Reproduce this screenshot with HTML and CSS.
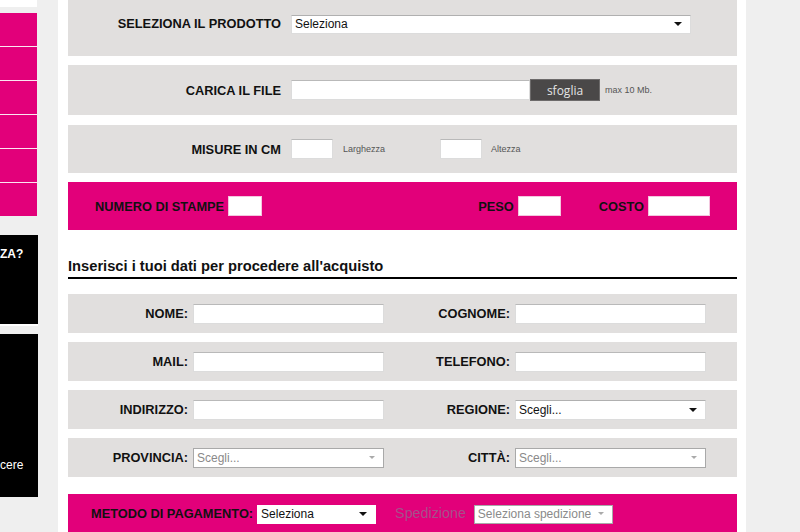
FILE: index.html
```html
<!DOCTYPE html>
<html lang="it">
<head>
    <meta charset="UTF-8">
    <meta name="viewport" content="width=device-width, initial-scale=1.0">
    <title>Ordina la tua stampa</title>
    <link rel="stylesheet" href="styles.css">
</head>
<body>
    <div class="page">

        <!-- colonna laterale (tagliata a sinistra) -->
        <aside class="sidebar">
            <div class="side-top"></div>
            <ul class="side-menu">
                <li></li>
                <li></li>
                <li></li>
                <li></li>
                <li></li>
                <li></li>
            </ul>
            <div class="side-box side-box-small">
                <p class="side-title">ZA?</p>
            </div>
            <div class="side-box side-box-big">
                <p class="side-text">cere</p>
            </div>
        </aside>

        <div class="gutter"></div>

        <main class="content">
            <form action="">

                <div class="panel panel-first">
                    <label class="panel-label" for="prodotto">SELEZIONA IL PRODOTTO</label>
                    <span class="select-wrap select-product">
                        <select id="prodotto">
                            <option value="">Seleziona</option>
                        </select>
                    </span>
                </div>

                <div class="panel panel-file">
                    <label class="panel-label" for="file">CARICA IL FILE</label>
                    <input class="field field-file" id="file" type="text">
                    <button class="btn-browse" type="button">sfoglia</button>
                    <span class="hint">max 10 Mb.</span>
                </div>

                <div class="panel panel-size">
                    <label class="panel-label" for="larghezza">MISURE IN CM</label>
                    <input class="field field-size" id="larghezza" type="text">
                    <span class="hint hint-size">Larghezza</span>
                    <input class="field field-size" id="altezza" type="text">
                    <span class="hint">Altezza</span>
                </div>

                <div class="pink-bar">
                    <label class="pink-label" for="stampe">NUMERO DI STAMPE</label>
                    <input class="field-pink stampe" id="stampe" type="text">
                    <label class="pink-label peso" for="peso">PESO</label>
                    <input class="field-pink peso-input" id="peso" type="text">
                    <label class="pink-label" for="costo">COSTO</label>
                    <input class="field-pink costo-input" id="costo" type="text">
                </div>

                <h2 class="section-title">Inserisci i tuoi dati per procedere all'acquisto</h2>

                <div class="row">
                    <label for="nome">NOME:</label>
                    <input class="field" id="nome" type="text">
                    <label for="cognome">COGNOME:</label>
                    <input class="field" id="cognome" type="text">
                </div>

                <div class="row">
                    <label for="mail">MAIL:</label>
                    <input class="field" id="mail" type="text">
                    <label for="telefono">TELEFONO:</label>
                    <input class="field" id="telefono" type="text">
                </div>

                <div class="row">
                    <label for="indirizzo">INDIRIZZO:</label>
                    <input class="field" id="indirizzo" type="text">
                    <label for="regione">REGIONE:</label>
                    <span class="select-wrap">
                        <select id="regione">
                            <option value="">Scegli...</option>
                        </select>
                    </span>
                </div>

                <div class="row">
                    <label for="provincia">PROVINCIA:</label>
                    <span class="select-wrap is-disabled">
                        <select id="provincia" disabled>
                            <option value="">Scegli...</option>
                        </select>
                    </span>
                    <label for="citta">CITTÀ:</label>
                    <span class="select-wrap is-disabled">
                        <select id="citta" disabled>
                            <option value="">Scegli...</option>
                        </select>
                    </span>
                </div>

                <div class="pay-bar">
                    <label class="pink-label" for="pagamento">METODO DI PAGAMENTO:</label>
                    <span class="select-wrap select-pay">
                        <select id="pagamento">
                            <option value="">Seleziona</option>
                        </select>
                    </span>
                    <label class="ship-label" for="spedizione">Spedizione</label>
                    <span class="select-wrap is-disabled select-ship">
                        <select id="spedizione" disabled>
                            <option value="">Seleziona spedizione</option>
                        </select>
                    </span>
                </div>

            </form>
        </main>

        <div class="right-side"></div>
    </div>
</body>
</html>
```

FILE: styles.css
```css
* {
    box-sizing: border-box;
    font-family: Arial, "Liberation Sans", Helvetica, sans-serif;
}

body {
    margin: 0;
    background-color: #efefef;
    overflow: hidden;
}

.page {
    display: flex;
    height: 532px;
    overflow: hidden;
}

/* ---- colonna laterale ---- */

.sidebar {
    width: 38px;
    flex-shrink: 0;
    display: flex;
    flex-direction: column;
}

.side-top {
    height: 7px;
    width: 37px;
    background-color: #fff;
    margin-bottom: 6px;
}

.side-menu {
    list-style: none;
    margin: 0;
    padding: 0;
    width: 37px;
    display: flex;
    flex-direction: column;
    gap: 1px;
    background-color: #fbe6f1;
}

.side-menu li {
    height: 33px;
    background-color: #e2007a;
}

.side-box {
    background-color: #000;
    color: #fff;
    display: flex;
    white-space: nowrap;
}

.side-box-small {
    margin-top: 19px;
    height: 91px;
    border-bottom: 2px solid #fff;
}

.side-box-big {
    margin-top: 8px;
    height: 163px;
    align-items: flex-end;
    padding-bottom: 25px;
}

.side-title {
    margin: 12px 0 0;
    font-size: 12px;
    font-weight: bold;
}

.side-text {
    margin: 0;
    font-size: 12px;
}

.gutter {
    width: 20px;
    flex-shrink: 0;
}

.right-side {
    flex: 1;
}

/* ---- contenuto ---- */

.content {
    width: 688px;
    flex-shrink: 0;
    background-color: #fff;
    padding: 0 9px 0 10px;
}

.panel {
    background-color: #e1dfde;
    display: flex;
    align-items: center;
    margin-bottom: 9px;
}

.panel-first {
    height: 56px;
    align-items: flex-start;
    padding-top: 14px;
    margin-bottom: 9px;
}

.panel-file {
    height: 50px;
    margin-bottom: 10px;
}

.panel-size {
    height: 48px;
}

.panel-label {
    width: 213px;
    margin-right: 10px;
    text-align: right;
    font-size: 12.8px;
    font-weight: bold;
    color: #111;
    line-height: 19px;
}

.field {
    height: 20px;
    background-color: #fff;
    border: 1px solid #dcdcdc;
    border-top-color: #b9b9b9;
    padding: 0 4px;
    font-size: 12px;
    outline: none;
}

.field-file {
    width: 239px;
}

.btn-browse {
    width: 70px;
    height: 22px;
    background-color: #4a4848;
    border: 1px solid #6d6b6b;
    color: #e4e4e4;
    font-family: "Open Sans", sans-serif;
    font-size: 12px;
    padding: 0;
}

.hint {
    font-size: 9px;
    color: #555;
    margin-left: 5px;
}

.field-size {
    width: 42px;
}

.panel-size .hint {
    margin-left: 9px;
}

.panel-size .hint-size {
    margin-left: 10px;
    width: 97px;
}

/* ---- select ---- */

.select-wrap {
    position: relative;
    display: inline-block;
    width: 191px;
    height: 20px;
}

.select-wrap select {
    appearance: none;
    -webkit-appearance: none;
    width: 100%;
    height: 100%;
    background-color: #fff;
    border: 1px solid #dcdcdc;
    border-top-color: #b0b0b0;
    border-radius: 0;
    padding: 0 3px;
    font-size: 12px;
    color: #111;
    outline: none;
    opacity: 1;
}

.select-wrap::after {
    content: "";
    position: absolute;
    right: 9px;
    top: 8px;
    border-left: 4px solid transparent;
    border-right: 4px solid transparent;
    border-top: 4px solid #111;
    pointer-events: none;
}

.select-wrap.is-disabled select {
    border: 1px solid #a9a9a9;
    color: #8a8a8a;
    background-color: #fff;
}

.select-wrap.is-disabled::after {
    border-top-color: #aaa;
    border-left-width: 3px;
    border-right-width: 3px;
    border-top-width: 3px;
}

.select-product {
    width: 400px;
    height: 19px;
}

/* ---- barra rosa ---- */

.pink-bar {
    background-color: #e2007a;
    height: 48px;
    display: flex;
    align-items: center;
    padding: 0 27px;
}

.pink-label {
    font-size: 12.8px;
    font-weight: bold;
    color: #111;
    margin-right: 4px;
}

.field-pink {
    height: 20px;
    background-color: #fff;
    border: 1px solid #f3c6de;
    outline: none;
}

.stampe {
    width: 34px;
}

.peso {
    margin-left: auto;
}

.peso-input {
    width: 43px;
    margin-right: 38px;
}

.costo-input {
    width: 62px;
}

.section-title {
    margin: 27px 0 0;
    padding-bottom: 2px;
    border-bottom: 2px solid #000;
    font-size: 14.7px;
    line-height: 18px;
    color: #111;
}

/* ---- righe dati ---- */

.row {
    background-color: #e1dfde;
    height: 39px;
    display: grid;
    grid-template-columns: 120px 191px 121px 191px;
    column-gap: 5px;
    align-items: center;
    margin-bottom: 9px;
}

.section-title + .row {
    margin-top: 15px;
}

.row label {
    text-align: right;
    font-size: 12.8px;
    font-weight: bold;
    color: #111;
}

.row .field {
    width: 191px;
}

.pay-bar {
    margin-top: 17px;
    background-color: #e2007a;
    height: 50px;
    display: flex;
    align-items: flex-start;
    padding: 10px 0 0 23px;
}

.pay-bar .pink-label {
    line-height: 19px;
}

.select-pay {
    width: 119px;
    height: 19px;
}

.select-pay select {
    border-color: #fff;
}

.ship-label {
    margin-left: 19px;
    font-size: 14.3px;
    line-height: 19px;
    color: #a5508a;
    margin-right: 8px;
}

.select-ship {
    width: 139px;
    height: 19px;
}

.select-ship select {
    color: #8a8a8a;
    border-color: #c9c9c9;
}
```
